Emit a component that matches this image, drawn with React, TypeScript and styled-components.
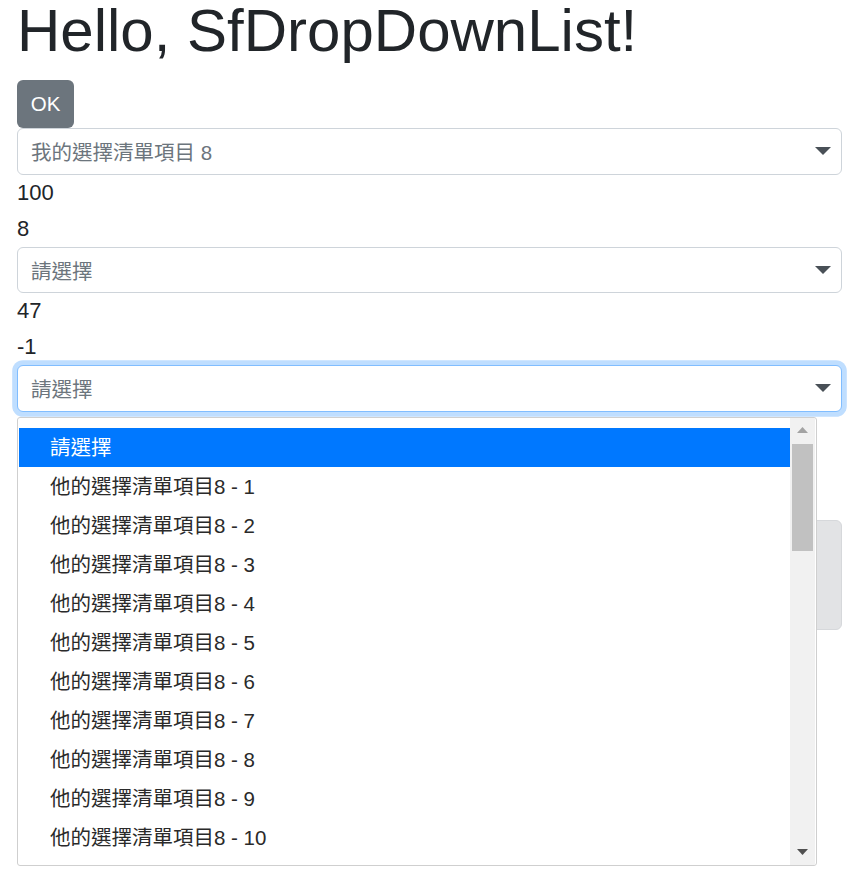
import React from "react";
import styled, { createGlobalStyle } from "styled-components";

const GlobalStyle = createGlobalStyle`
  html, body {
    margin: 0;
    padding: 0;
    background: #ffffff;
  }
  body {
    font-family: "Liberation Sans", Arial, "Noto Sans CJK TC", sans-serif;
    color: #212529;
  }
  * { box-sizing: border-box; }
`;

const Page = styled.div`
  min-height: 881px;
  padding: 0 10px 0 17px;
`;

const Title = styled.h1`
  margin: 0 0 18px;
  font-size: 60px;
  line-height: 62px;
  font-weight: 400;
  color: #212529;
`;

const Button = styled.button`
  display: block;
  width: 57px;
  height: 48px;
  padding: 0;
  border: none;
  border-radius: 6px;
  background: #6c757d;
  color: #ffffff;
  font-family: inherit;
  font-size: 20.5px;
`;

const SelectBox = styled.div<{ $focused?: boolean }>`
  display: flex;
  align-items: center;
  justify-content: space-between;
  height: 46.5px;
  padding: 0 10px 0 13px;
  border: 1px solid ${(p) => (p.$focused ? "#80bdff" : "#ced4da")};
  border-radius: 6px;
  background: #ffffff;
  color: #6c757d;
  font-size: 20.5px;
  box-shadow: ${(p) => (p.$focused ? "0 0 0 4.8px rgba(0, 123, 255, 0.25)" : "none")};
`;

const ValueLine = styled.div`
  font-size: 22px;
  line-height: 36px;
`;

const DropdownWrap = styled.div`
  position: relative;
  z-index: 10;
`;

const Popup = styled.div`
  position: absolute;
  top: calc(100% + 5px);
  left: 0;
  width: 800px;
  height: 449px;
  display: flex;
  padding: 0 1px;
  border: 1px solid #cfcfcf;
  border-radius: 3px;
  background: #ffffff;
  overflow: hidden;
`;

const OptionList = styled.div`
  flex: 1;
  padding-top: 10px;
  overflow: hidden;
`;

const Option = styled.div<{ $active?: boolean }>`
  height: 39px;
  line-height: 39px;
  padding-left: 31px;
  font-size: 20.5px;
  white-space: nowrap;
  color: ${(p) => (p.$active ? "#ffffff" : "#2a2a2a")};
  background: ${(p) => (p.$active ? "#0078ff" : "transparent")};
`;

const Scrollbar = styled.div`
  width: 25px;
  display: flex;
  flex-direction: column;
  background: #f1f1f1;
`;

const ScrollArrow = styled.div`
  height: 25px;
  display: flex;
  align-items: center;
  justify-content: center;
`;

const ScrollTrack = styled.div`
  flex: 1;
  padding: 1px 2px 0;
`;

const ScrollThumb = styled.div`
  height: 107px;
  background: #c1c1c1;
`;

const ResultPanel = styled.div`
  margin-top: 108.5px;
  height: 110px;
  border: 1px solid #d6d8db;
  border-radius: 6px;
  background: #e2e3e5;
`;

const Caret = () => (
  <svg width="16" height="8" viewBox="0 0 16 8">
    <polygon points="0,0 16,0 8,8" fill="#495057" />
  </svg>
);

const Arrow = ({ up, color }: { up?: boolean; color: string }) => (
  <svg width="11" height="6" viewBox="0 0 11 6">
    <polygon points={up ? "0,6 11,6 5.5,0" : "0,0 11,0 5.5,6"} fill={color} />
  </svg>
);

const items = Array.from({ length: 10 }, (_, i) => `他的選擇清單項目8 - ${i + 1}`);

export default function App() {
  return (
    <>
      <GlobalStyle />
      <Page>
        <Title>Hello, SfDropDownList!</Title>
        <Button>OK</Button>
        <SelectBox>
          <span>我的選擇清單項目 8</span>
          <Caret />
        </SelectBox>
        <ValueLine>100</ValueLine>
        <ValueLine>8</ValueLine>
        <SelectBox>
          <span>請選擇</span>
          <Caret />
        </SelectBox>
        <ValueLine>47</ValueLine>
        <ValueLine>-1</ValueLine>
        <DropdownWrap>
          <SelectBox $focused>
            <span>請選擇</span>
            <Caret />
          </SelectBox>
          <Popup>
            <OptionList>
              <Option $active>請選擇</Option>
              {items.map((t) => (
                <Option key={t}>{t}</Option>
              ))}
            </OptionList>
            <Scrollbar>
              <ScrollArrow>
                <Arrow up color="#a3a3a3" />
              </ScrollArrow>
              <ScrollTrack>
                <ScrollThumb />
              </ScrollTrack>
              <ScrollArrow>
                <Arrow color="#505050" />
              </ScrollArrow>
            </Scrollbar>
          </Popup>
        </DropdownWrap>
        <ResultPanel />
      </Page>
    </>
  );
}
